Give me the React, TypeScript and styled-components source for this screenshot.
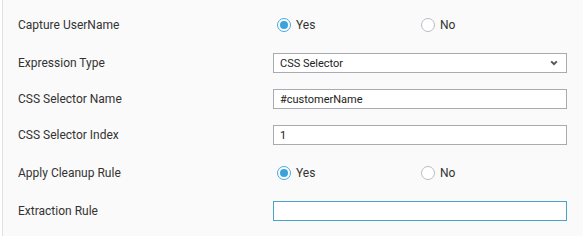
import React from "react";
import styled, { createGlobalStyle } from "styled-components";

const GlobalStyle = createGlobalStyle`
    html, body {
        margin: 0;
        padding: 0;
        background: #ffffff;
    }

    body {
        font-family: Roboto, "Liberation Sans", sans-serif;
    }
`;

type RowKind = "radio" | "input";

const App = () => {
    return (
        <React.Fragment>
            <GlobalStyle />
            <Page>
                <FormPanel>
                    <Row kind="radio" first>
                        <Label>Capture UserName</Label>
                        <RadioGroup>
                            <RadioOption>
                                <RadioCircle checked />
                                <RadioText>Yes</RadioText>
                            </RadioOption>
                            <RadioOption>
                                <RadioCircle />
                                <RadioText>No</RadioText>
                            </RadioOption>
                        </RadioGroup>
                    </Row>

                    <Row kind="input">
                        <Label>Expression Type</Label>
                        <SelectBox>
                            <span>CSS Selector</span>
                            <svg width="8" height="6" viewBox="0 0 8 6">
                                <path
                                    d="M1.2 1.4 L4 4.2 L6.8 1.4"
                                    fill="none"
                                    stroke="#555"
                                    strokeWidth="2"
                                />
                            </svg>
                        </SelectBox>
                    </Row>

                    <Row kind="input">
                        <Label>CSS Selector Name</Label>
                        <TextBox>#customerName</TextBox>
                    </Row>

                    <Row kind="input">
                        <Label>CSS Selector Index</Label>
                        <TextBox>1</TextBox>
                    </Row>

                    <Row kind="radio">
                        <Label>Apply Cleanup Rule</Label>
                        <RadioGroup>
                            <RadioOption>
                                <RadioCircle checked />
                                <RadioText>Yes</RadioText>
                            </RadioOption>
                            <RadioOption>
                                <RadioCircle />
                                <RadioText>No</RadioText>
                            </RadioOption>
                        </RadioGroup>
                    </Row>

                    <Row kind="input">
                        <Label>Extraction Rule</Label>
                        <TextBox focused />
                    </Row>
                </FormPanel>
            </Page>
        </React.Fragment>
    );
};

export default App;

const Page = styled.div`
    height: 236px;
    padding-left: 2px;
    box-sizing: border-box;
    background: #ffffff;
`;

const FormPanel = styled.div`
    height: 100%;
    box-sizing: border-box;
    border-left: 1px solid #e2e2e2;
    background: #fafafa;
    padding: 4px 0 0 15px;
`;

const Row = styled.div<{ kind: RowKind; first?: boolean }>`
    display: grid;
    grid-template-columns: 255px 294px;
    align-items: center;
    height: ${({ kind, first }) =>
        kind === "radio" ? (first ? "41px" : "40px") : "36px"};
`;

const Label = styled.div`
    font-size: 12px;
    color: #333333;
    line-height: 14px;
`;

const RadioGroup = styled.div`
    display: grid;
    grid-template-columns: 144px 144px;
    padding-left: 4px;
`;

const RadioOption = styled.label`
    display: flex;
    align-items: center;
    gap: 5px;
`;

const RadioCircle = styled.span<{ checked?: boolean }>`
    width: 14px;
    height: 14px;
    box-sizing: border-box;
    border-radius: 50%;
    background: #ffffff;
    border: 1px solid ${({ checked }) => (checked ? "#45a9dc" : "#b9bcc4")};
    display: flex;
    align-items: center;
    justify-content: center;

    &::after {
        content: "";
        display: ${({ checked }) => (checked ? "block" : "none")};
        width: 8px;
        height: 8px;
        border-radius: 50%;
        background: #3aa3dc;
    }
`;

const RadioText = styled.span`
    font-size: 12px;
    color: #333333;
`;

const SelectBox = styled.div`
    height: 20px;
    box-sizing: border-box;
    border: 1px solid #a9abb3;
    background: #ffffff;
    display: flex;
    align-items: center;
    justify-content: space-between;
    padding: 0 8px 0 6px;
    font-size: 11px;
    color: #222222;
`;

const TextBox = styled.div<{ focused?: boolean }>`
    height: 20px;
    box-sizing: border-box;
    border: 1px solid ${({ focused }) => (focused ? "#4aa3c9" : "#a9abb3")};
    background: #ffffff;
    display: flex;
    align-items: center;
    padding: 0 6px;
    font-size: 11px;
    color: #222222;
`;
